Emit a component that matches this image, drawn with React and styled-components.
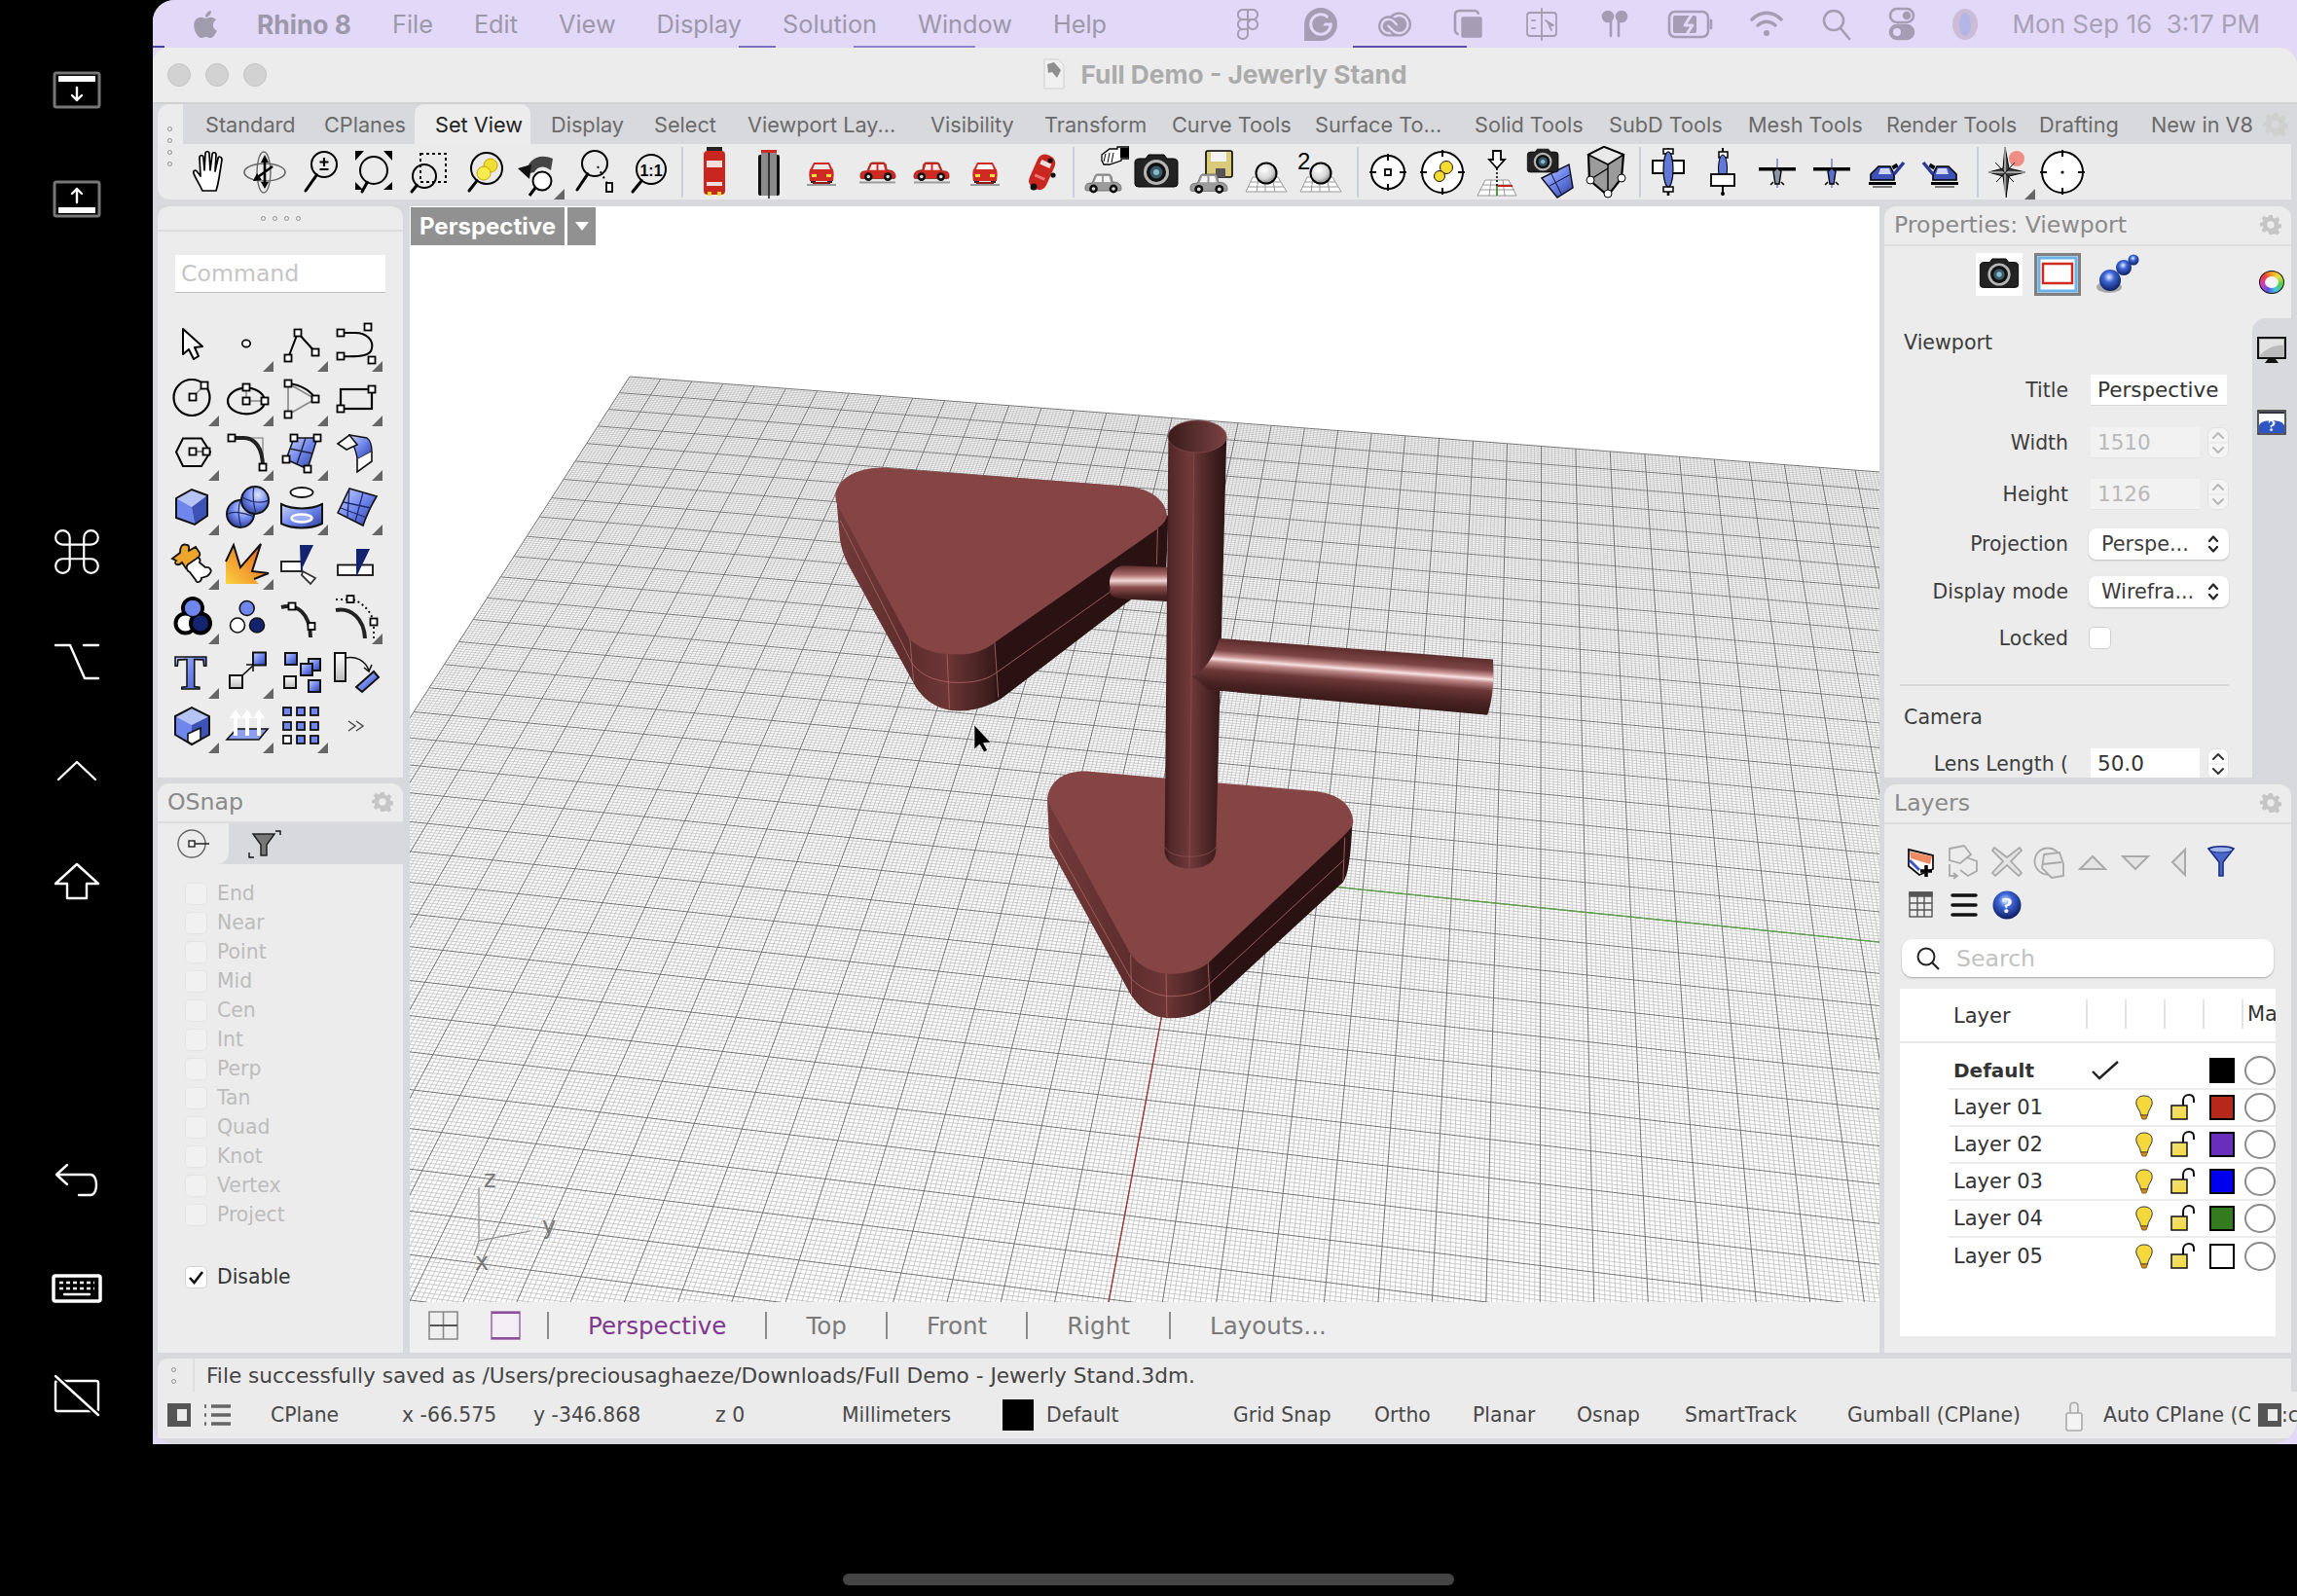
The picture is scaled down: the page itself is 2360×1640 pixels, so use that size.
import React from 'react';
import styled, { createGlobalStyle } from 'styled-components';
import { FaApple } from 'react-icons/fa';
import { SiFigma, SiGrammarly, SiAdobecreativecloud } from 'react-icons/si';

const GlobalStyle = createGlobalStyle`
  html, body { margin: 0; padding: 0; background: #000; width: 2360px; height: 1640px; overflow: hidden; }
  * { box-sizing: border-box; }
`;

const UI = `'DejaVu Sans', 'Liberation Sans', sans-serif`;
const SYS = `Inter, 'Liberation Sans', sans-serif`;

const Root = styled.div`
  width: 2360px; height: 1640px; background: #000; display: flex; flex-direction: column; overflow: hidden;
`;
const TopArea = styled.div`display: flex; height: 1484px;`;
const Sidebar = styled.aside`width: 157px; flex: none; display: flex; flex-direction: column; align-items: center;`;
const SideGroup = styled.div`display: flex; flex-direction: column; gap: ${p => p.$gap}px; margin-top: ${p => p.$mt}px;`;
const SideIcon = styled.svg`width: 56px; height: 56px; display: block; fill: none; stroke: #fff; stroke-width: ${p => p.$sw || 2.4}; stroke-linecap: round; stroke-linejoin: round;`;
const Main = styled.div`flex: 1; min-width: 0; display: flex; flex-direction: column; background: #e2d9f8; border-radius: 22px 0 0 0; overflow: hidden;`;
const MenuBar = styled.header`
  height: 49px; flex: none; display: flex; align-items: center; padding: 0 38px 0 40px; color: #9d97aa;
  font: 400 25.3px ${SYS};
  background: linear-gradient(to right, #4a3fa5 0 12px, #e2d9f8 12px 602px, #7a6fc0 602px 640px, #e2d9f8 640px 720px, #8d82d0 720px 845px, #e2d9f8 845px 1233px, #5a4fa8 1233px 1350px, #e2d9f8 1350px) bottom / 100% 2px no-repeat, #e2d9f8;
`;
const AppleMark = styled(FaApple)`width: 28px; height: 32px; color: #a19bae; margin-right: 39px; flex: none;`;
const MenuItem = styled.span`margin-right: 42px; white-space: nowrap; font-weight: ${p => (p.$bold ? 700 : 400)}; font-size: ${p => (p.$bold ? '26.4px' : 'inherit')};`;
const MenuRight = styled.div`margin-left: auto; display: flex; align-items: center;`;
const StatusCell = styled.div`width: ${p => p.$w}px; display: flex; justify-content: center; align-items: center; color: #a49db3; font-size: 0;`;
const StatusSvg = styled.svg`width: ${p => p.$s || 36}px; height: 36px; display: block; fill: none; stroke: ${p => p.$none ? 'none' : '#a49db3'}; stroke-width: ${p => p.$sw || 2.6}; stroke-linecap: round; stroke-linejoin: round;`;
const Clock = styled.time`width: 258px; margin-left: 13px; text-align: right; white-space: pre; font-size: 26px; color: #a8a1b6;`;
const Window = styled.div`
  flex: 1; min-height: 0; background: #d8d9dd; border-radius: 16px 18px 26px 22px; overflow: hidden; display: flex; flex-direction: column;
`;
const TitleBar = styled.div`height: 58px; flex: none; background: #ececec; border-bottom: 2px solid #d0d0d0; display: grid; grid-template-columns: 1fr auto 1fr; align-items: center;`;
const Lights = styled.div`display: flex; gap: 15px; padding-left: 15px;`;
const Light = styled.i`width: 24px; height: 24px; border-radius: 50%; background: #d2d2d2; border: 1px solid #c4c4c4; display: block;`;
const Title = styled.h1`margin: 0 0 2px; display: flex; align-items: center; gap: 15px; font: 700 26.3px ${SYS}; color: #ababab; white-space: nowrap;`;
const Toolbar = styled.div`margin: 0 6px 0 5px; height: 98px; flex: none; display: flex; flex-direction: column; border-radius: 12px 0 0 12px; overflow: hidden;`;
const TabRow = styled.nav`height: 41px; flex: none; display: flex; background: linear-gradient(to right, #ececec 0 26px, #d8d9dd 26px); padding-left: 35px; position: relative; align-items: stretch;`;
const Tab = styled.div`
  width: ${p => p.$w}px; flex: none; display: flex; align-items: center; white-space: nowrap;
  padding-left: ${p => (p.$active ? 21 : 14)}px; margin-right: ${p => (p.$active ? 7 : 0)}px;
  font: 400 21.7px ${SYS}; color: ${p => (p.$active ? '#222' : '#6a6a6a')};
  background: ${p => (p.$active ? '#ececec' : 'transparent')};
  border-radius: ${p => (p.$active ? '10px 10px 0 0' : '0')};
`;
const GearSlot = styled.div`position: absolute; right: 3px; top: 8px; width: 26px; height: 26px;`;
const ToolRow = styled.div`height: 57px; flex: none; display: flex; align-items: center; background: #ebebeb; padding-left: 26px; position: relative;`;
const Grip = styled.div`position: absolute; left: 10px; top: -18px; display: flex; flex-direction: column; gap: 7px; z-index: 2;`;
const GripDot = styled.i`display: block; width: 5px; height: 5px; border-radius: 50%; border: 1.2px solid #8f8f8f;`;
const ToolSep = styled.i`display: block; width: 2px; height: 52px; flex: none; background: #c9cfdc; margin: 0 ${p => p.$r}px 0 ${p => p.$l}px;`;
const IconSvg = styled.svg`width: ${p => p.$s || 56}px; height: ${p => p.$s || 56}px; display: block; flex: none;`;
const Workspace = styled.div`height: 1185px; flex: none; padding: 7px 6px 0 5px; display: flex;`;
const Col = styled.div`width: ${p => p.$w}px; flex: none; display: flex; flex-direction: column; margin-left: ${p => p.$ml || 0}px; min-width: 0;`;
const Panel = styled.section`height: ${p => p.$h}px; flex: none; background: #ececec; border-radius: 12px 12px 0 0; overflow: hidden; display: flex; flex-direction: column; margin-top: ${p => p.$mt || 0}px; position: relative;`;
const PanelHead = styled.div`height: 41px; flex: none; display: flex; align-items: center; justify-content: space-between; padding: 0 10px 2px; border-bottom: 2px solid #dedede; font: 400 23.6px ${UI}; color: #8a8a8a;`;
const DragHead = styled.div`height: 26px; flex: none; border-bottom: 2px solid #dedede; display: flex; justify-content: center; align-items: center; gap: 7px;`;
const DragDot = styled.i`display: block; width: 5px; height: 5px; border-radius: 50%; border: 1.2px solid #8f8f8f;`;
const CommandInput = styled.div`margin: 24px 18px 0; height: 39px; background: #fff; border-bottom: 1.5px solid #bdbdbd; font: 400 23.6px ${UI}; color: #c6c6c6; display: flex; align-items: center; padding-left: 6px;`;
const ToolGrid = styled.div`margin: 25px 0 0 7px; display: grid; grid-template-columns: repeat(4, 56px); grid-auto-rows: 56px;`;
const SnapTabs = styled.div`height: 42px; flex: none; display: flex; background: #d8d9dd;`;
const SnapTab = styled.div`width: 73px; background: #ececec; border-radius: 0 0 12px 0; display: flex; align-items: center; justify-content: center;`;
const SnapTabB = styled.div`width: 73px; display: flex; align-items: center; justify-content: center;`;
const SnapList = styled.div`padding: 15px 0 0 28px; display: flex; flex-direction: column;`;
const SnapRow = styled.label`height: 30px; flex: none; display: flex; align-items: center; gap: 10px; font: 400 20.4px ${UI}; color: ${p => (p.$on ? '#333' : '#bcbcbc')}; margin-top: ${p => p.$mt || 0}px;`;
const CheckBox = styled.i`width: 23px; height: 23px; border-radius: 5px; display: flex; align-items: center; justify-content: center; background: ${p => (p.$on ? '#fff' : '#f1f1f1')}; border: 1px solid ${p => (p.$on ? '#d4d4d4' : '#e4e4e4')}; flex: none;`;
const Viewport = styled.div`height: 1126px; flex: none; background: #fff; position: relative; overflow: hidden;`;
const SceneSvg = styled.svg`display: block; width: 1510px; height: 1126px;`;
const ViewLabel = styled.div`position: absolute; left: 1px; top: 1px; display: flex; gap: 3px; height: 39px;`;
const ViewName = styled.div`width: 158px; background: #919191; color: #fff; font: 700 24px ${SYS}; display: flex; align-items: center; justify-content: center;`;
const ViewArrow = styled.div`width: 29px; background: #919191; display: flex; align-items: center; justify-content: center;`;
const ViewTabs = styled.div`height: 52px; flex: none; background: #efefef; display: flex; align-items: center; padding-left: 19px; padding-bottom: 4px; font: 400 24.6px ${UI}; color: #7a7a7a;`;
const ViewIcon = styled.svg`width: 31px; height: 30px; display: block; margin-right: ${p => p.$mr}px; flex: none;`;
const ViewSep = styled.i`width: 2px; height: 28px; background: #8c8c8c; display: block; margin: 0 40px 0 ${p => (p.$first ? 0 : 40)}px; flex: none;`;
const ViewTab = styled.span`color: ${p => (p.$active ? '#80388f' : '#7a7a7a')}; white-space: nowrap;`;
const PropBody = styled.div`flex: 1; min-height: 0; display: flex;`;
const PropContent = styled.div`width: 378px; flex: none; padding-top: 5px;`;
const PropIcons = styled.div`display: flex; height: 48px; margin: 0 0 25px 94px; align-items: center;`;
const PropIconBox = styled.div`width: ${p => p.$w}px; height: ${p => p.$h}px; margin-right: ${p => p.$mr}px; background: ${p => p.$bg || 'transparent'}; flex: none; display: flex; align-items: center; justify-content: center;`;
const Heading = styled.div`height: ${p => p.$h}px; margin-top: ${p => p.$mt || 0}px; padding-left: 20px; display: flex; align-items: center; font: 400 20.6px ${UI}; color: #3c3c3c;`;
const PropRow = styled.div`height: ${p => p.$h}px; display: flex; align-items: center; font: 400 20.4px ${UI}; color: #3c3c3c;`;
const PropLabel = styled.span`width: 189px; flex: none; text-align: right; white-space: nowrap; margin-right: 23px;`;
const TextField = styled.div`
  width: ${p => p.$w}px; height: 32px; flex: none; background: ${p => (p.$off ? '#f2f2f2' : '#fff')}; color: ${p => (p.$off ? '#b9b9b9' : '#333')};
  display: flex; align-items: center; padding-left: 7px; font-size: 21.5px; border-bottom: 1px solid ${p => (p.$off ? '#e4e4e4' : '#d8d8d8')};
`;
const Stepper = styled.svg`width: 22px; height: 32px; margin-left: 8px; flex: none; display: block;`;
const SelectBox = styled.div`width: 144px; height: 32px; flex: none; margin-left: -2px; background: #fff; border-radius: 8px; box-shadow: 0 1px 2px #bdbdbd; display: flex; align-items: center; justify-content: space-between; padding: 0 10px 0 13px; font-size: 20.8px;`;
const PropCheck = styled.i`width: 23px; height: 23px; display: block; flex: none; background: #fff; border: 1px solid #d0d0d0; border-radius: 5px; margin-left: -2px;`;
const Divider = styled.hr`margin: 23px 0 0 16px; width: 338px; height: 2px; background: #d8d8d8; border: 0;`;
const SideTabs = styled.div`width: 40px; flex: none; display: flex; flex-direction: column; background: #ececec;`;
const SideTabOn = styled.div`height: 74px; flex: none; display: flex; align-items: center; justify-content: center; border-radius: 0 0 12px 0; background: #ececec;`;
const SideTabRest = styled.div`flex: 1; background: #d8d9dd; border-radius: 14px 0 0 0; display: flex; flex-direction: column; align-items: center; padding-top: 19px; gap: 47px;`;
const ColorWheel = styled.i`width: 26px; height: 24px; border-radius: 50%; border: 1.5px solid #111; display: flex; align-items: center; justify-content: center; background: conic-gradient(#f3a02c, #e9e23a, #55cf4c, #3fc7e0, #5a50e0, #d23cc0, #e83b3b, #f3a02c);`;
const WheelHole = styled.i`display: block; width: 14px; height: 12px; border-radius: 50%; background: #f5f5f5;`;
const LayerTools = styled.div`padding: 17px 0 0 16px; display: grid; grid-template-columns: repeat(8, 44px); grid-auto-rows: 44px;`;
const LayerTool = styled.svg`width: 44px; height: 44px; display: block;`;
const SearchBox = styled.div`margin: 13px 0 0 18px; width: 382px; height: 39px; flex: none; background: #fff; border-radius: 11px; box-shadow: 0 1px 2px #a9a9a9; display: flex; align-items: center; padding-left: 14px; gap: 16px; font: 400 23.6px ${UI}; color: #c2c2c2;`;
const LayerList = styled.div`margin: 12px 0 0 16px; width: 386px; height: 357px; flex: none; background: #fff; overflow: hidden; font: 400 21px ${UI}; color: #333;`;
const LayerHead = styled.div`height: 56px; padding-top: 1px; display: flex; align-items: center; border-bottom: 2px solid #e8e8e8;`;
const LayerHeadName = styled.div`width: 191px; padding-left: 55px; flex: none;`;
const HeadCol = styled.div`width: 40px; height: 30px; flex: none; border-left: 2px solid #e4e4e4; padding-left: 4px; white-space: nowrap; margin-top: -3px; line-height: 30px;`;
const LayerBody = styled.div`padding: 10px 0 0 50px;`;
const LayerRow = styled.div`height: 38px; display: grid; grid-template-columns: 141px 40px 40px 40px 40px 35px; align-items: center; border-bottom: ${p => (p.$last ? '0' : '2px solid #ececec')}; justify-items: center;`;
const LayerName = styled.span`justify-self: start; padding-left: 5px; font-weight: ${p => (p.$bold ? 700 : 400)}; font-size: ${p => (p.$bold ? '20px' : 'inherit')}; white-space: nowrap;`;
const CellSvg = styled.svg`width: 26px; height: 28px; display: block;`;
const Swatch = styled.i`display: block; width: 26px; height: 26px; background: ${p => p.$c}; border: 2px solid #000;`;
const MatCircle = styled.i`display: block; width: 32px; height: 30px; border-radius: 50%; border: 2px solid #8b8b8b; justify-self: end; background: #fff;`;
const StatusMsg = styled.div`margin: 6px 6px 0 5px; height: 34px; flex: none; background: #ebebeb; display: flex; align-items: center; border-radius: 10px 0 0 0; font: 400 21.65px ${UI}; color: #444; padding-left: 14px; white-space: nowrap;`;
const MsgGrip = styled.div`display: flex; flex-direction: column; gap: 7px; flex: none; margin-right: 17px;`;
const MsgLine = styled.i`display: block; width: 2px; height: 34px; background: #dedede; margin-right: 12px; flex: none;`;
const StatusBar = styled.footer`margin: 0 0 0 5px; height: 48px; flex: none; background: #ebebeb; display: flex; align-items: center; padding-left: 10px; font: 400 20.4px ${UI}; color: #484848; overflow: hidden;`;
const PaneIcon = styled.i`display: block; width: 24px; height: 24px; flex: none; margin-left: ${p => p.$ml || 0}px; border: 6px solid #555; border-left-width: 10px; border-right-width: 4px; background: #ececec;`;
const ListIcon = styled.svg`width: 30px; height: 30px; margin: 0 39px 0 13px; display: block; flex: none;`;
const StatusItem = styled.span`width: ${p => p.$w}px; flex: none; white-space: nowrap; overflow: hidden;`;
const BlackBox = styled.i`display: block; width: 32px; height: 32px; background: #000; margin-right: 13px; flex: none;`;
const LockSvg = styled.svg`width: 39px; height: 34px; flex: none; display: block;`;
const Bottom = styled.div`flex: 1; display: flex; justify-content: center; align-items: flex-end; padding-bottom: 11px;`;
const HomeBar = styled.i`display: block; width: 628px; height: 12px; border-radius: 6px; background: #444;`;
const Defs = styled.svg`position: absolute; width: 0; height: 0;`;

/* ---------- helpers ---------- */
const H = ({ x, y, s = 7 }) => <rect x={x - s / 2} y={y - s / 2} width={s} height={s} fill="#fff" stroke="#000" strokeWidth="1.8" />;
const I = ({ fly, children }) => (
  <IconSvg viewBox="0 0 56 56">
    {children}
    {fly && <path d="M45 56H56V45Z" fill="#666" />}
  </IconSvg>
);
const Gear = ({ s = 22, c = '#c6c6c6' }) => (
  <svg width={s} height={s} viewBox="0 0 24 24"><path fill={c} fillRule="evenodd" d="M10 1h4l.6 3.2 2.1.9 2.7-1.9 2.8 2.8-1.9 2.7.9 2.1 3.2.6v4l-3.2.6-.9 2.1 1.9 2.7-2.8 2.8-2.7-1.9-2.1.9L14 23h-4l-.6-3.2-2.1-.9-2.7 1.9-2.8-2.8 1.9-2.7-.9-2.1L-.4 14v-4l3.2-.6.9-2.1L1.8 4.6 4.6 1.8l2.7 1.9 2.1-.9zM12 8a4 4 0 100 8 4 4 0 000-8z" /></svg>
);

/* ---------- cars ---------- */
const CarSide = ({ c = '#cf2a22', dark = '#8f1411', x = 10, y = 20, w = 38, flip, ground = '#9a9a9a' }) => (
  <g transform={`translate(${x} ${y}) scale(${(flip ? -1 : 1) * w / 38} ${w / 38}) translate(${flip ? -38 : 0} 0)`}>
    <path d="M1 14C1 10 3 9 8 9L11 2C11 1 12 0 14 0H25C27 0 27 1 28 2L29 8C35 8 38 10 38 15C38 17 37 17 36 17H3C1 17 1 16 1 14Z" fill={c} stroke={dark} strokeWidth=".8" />
    <path d="M13 2H18V8H10.5ZM20 2H25.5L27 8H20Z" fill="#fff" opacity=".9" />
    <circle cx="9.5" cy="15" r="4.4" fill="#111" /><circle cx="9.5" cy="15" r="1.8" fill="#ddd" />
    <circle cx="30" cy="15" r="4.4" fill="#111" /><circle cx="30" cy="15" r="1.8" fill="#ddd" />
    {ground && <rect x="0" y="20" width="38" height="2" fill={ground} />}
  </g>
);
const CarFront = ({ rear }) => (
  <I>
    <rect x="15" y="36" width="5" height="3" fill="#222" /><rect x="32" y="36" width="5" height="3" fill="#222" />
    <path d="M15 24L18 18H34L37 24C39 26 39 30 38 37H14C13 30 13 26 15 24Z" fill="#d02a24" />
    <path d="M19 20H33L35 25H17Z" fill={rear ? '#fff' : '#e9e9e9'} />
    <rect x="16" y="30" width="5" height="3" fill="#f2e23b" /><rect x="31" y="30" width="5" height="3" fill="#f2e23b" />
    <rect x="17" y="38" width="18" height="2" fill="#8d1612" />
    <rect x="11" y="40" width="30" height="2" fill="#9a9a9a" />
  </I>
);
const Magnifier = ({ cx, cy, r, x2, y2, children, fly }) => {
  const a = Math.atan2(y2 - cy, x2 - cx);
  return (
    <I fly={fly}>
      {children && children[0]}
      <circle cx={cx} cy={cy} r={r} fill="none" stroke="#000" strokeWidth="2" />
      <line x1={cx + Math.cos(a) * r} y1={cy + Math.sin(a) * r} x2={x2} y2={y2} stroke="#000" strokeWidth="3" strokeLinecap="round" />
      {children && children[1]}
    </I>
  );
};
const Sphere = ({ two }) => (
  <I>
    <path d="M8 48L15 33H41L50 48ZM13 38H44M10 43H47M21 33L19 48M28 33V48M35 33L38 48" fill="#fff" stroke="#999" strokeWidth="1" />
    <circle cx="29" cy="29" r="10.5" fill="url(#ball)" stroke="#000" strokeWidth="2" />
    {two && <text x="5" y="25" fontFamily="Liberation Sans, sans-serif" fontSize="24" fill="#000">2</text>}
  </I>
);
const Plane = ({ side, flip, c = '#8c95a8' }) =>
  side ? (
    <I>
      <g transform={flip ? 'translate(56 0) scale(-1 1)' : undefined}>
        <path d="M12 30L20 22H32L36 30V36H12Z" fill="#3e51b8" stroke="#000" strokeWidth="1.6" />
        <path d="M22 24H31L33 30H20Z" fill="#cfd6f5" />
        <rect x="34" y="20" width="6" height="4" transform="rotate(-30 37 22)" fill="#000" />
        <path d="M36 30L46 18" stroke="#2a3a9a" strokeWidth="3.5" />
        <rect x="10" y="38" width="28" height="3" fill="#000" /><rect x="14" y="42" width="20" height="2" fill="#777" />
      </g>
    </I>
  ) : (
    <I>
      <rect x="9" y="23" width="38" height="3.5" fill="#000" />
      <path d="M28 14V44" stroke="#3a4bb0" strokeWidth="1" />
      <path d="M24 27L28 24L32 27L30 40H26Z" fill={c} stroke="#000" strokeWidth="1.4" />
      <path d="M21 41L24 38M35 41L32 38" stroke="#000" strokeWidth="1.6" />
    </I>
  );

/* ---------- toolbar ---------- */
const toolbarA = [
  <I key="hand"><path d="M20 47C17 40 12 33 11 29C10 26 13 25 15 28L18 32L17 13C17 10 21 10 21 13L22 26L23 9C23 6 27 6 27 9L28 26L30 10C30 7 34 7 34 10L33 27L36 14C36 11 40 12 40 15L37 34C36 40 35 44 34 47Z" fill="#fff" stroke="#000" strokeWidth="1.7" strokeLinejoin="round" /></I>,
  <I key="orbit"><ellipse cx="27" cy="28" rx="7" ry="21" fill="none" stroke="#666" strokeWidth="1.4" /><ellipse cx="28" cy="28" rx="21" ry="9" fill="none" stroke="#666" strokeWidth="1.6" /><path d="M28 15V41M18 35L36 22" stroke="#000" strokeWidth="2.6" /><path d="M28 10L32 18H24ZM16 37L20 29L25 36ZM28 45L24 38H32Z" fill="#000" /></I>,
  <Magnifier key="zp" cx={33} cy={20} r={13} x2={14} y2={47}>{[null, <path key="p" d="M33 13V22M28.5 17.5H37.5M28.5 25H37.5" stroke="#000" strokeWidth="2.2" />]}</Magnifier>,
  <Magnifier key="ze" cx={28} cy={26} r={14} x2={16} y2={48}>{[null, <path key="c" d="M9 6H18L9 16ZM47 6H38L47 16ZM9 46V38L17 46ZM47 46V38L38 46Z" fill="#000" />]}</Magnifier>,
  <Magnifier key="zw" cx={24} cy={32} r={12} x2={11} y2={48}>{[null, <rect key="r" x="20" y="9" width="26" height="29" fill="none" stroke="#000" strokeWidth="2" strokeDasharray="3 3" />]}</Magnifier>,
  <Magnifier key="zs" cx={32} cy={24} r={16} x2={14} y2={47}>{[null, <g key="d"><circle cx="36" cy="21" r="7" fill="#f1de33" stroke="#c9a400" /><circle cx="29" cy="29" r="7" fill="#f7ec4f" stroke="#c9a400" /></g>]}</Magnifier>,
  <I key="rot" fly><path d="M16 30C18 14 30 8 44 14L42 26C34 20 28 22 25 28Z" fill="#444" /><path d="M8 24L22 20L20 35Z" fill="#111" /><circle cx="33" cy="37" r="9.5" fill="#fff" stroke="#000" strokeWidth="2" /><line x1="26" y1="44" x2="20" y2="52" stroke="#000" strokeWidth="3" /></I>,
  <Magnifier key="zt" cx={31} cy={19} r={13} x2={13} y2={46}>{[null, <g key="t"><path d="M34 22L44 40" stroke="#000" strokeWidth="2" strokeDasharray="2 4" /><rect x="43" y="39" width="6" height="9" fill="#fff" stroke="#000" strokeWidth="1.8" /></g>]}</Magnifier>,
  <Magnifier key="z1" cx={33} cy={25} r={15} x2={14} y2={48}>{[null, <text key="x" x="33" y="32" textAnchor="middle" fontSize="16" fontWeight="700" fontFamily="Liberation Sans, sans-serif">1:1</text>]}</Magnifier>,
];
const toolbarB = [
  <I key="t1"><rect x="17" y="6" width="22" height="45" rx="4" fill="#c9261f" /><rect x="20" y="2" width="16" height="4" fill="#222" /><rect x="20" y="16" width="16" height="7" fill="#f3dede" /><rect x="20" y="38" width="16" height="4" fill="#f3dede" /><rect x="21" y="48" width="4" height="4" fill="#f0d920" /><rect x="31" y="48" width="4" height="4" fill="#f0d920" /></I>,
  <I key="t2"><rect x="17" y="10" width="22" height="42" rx="2" fill="#111" /><rect x="20" y="5" width="16" height="4" fill="#d02a24" /><rect x="20" y="8" width="16" height="44" fill="#8a8a8a" /><rect x="27.3" y="8" width="1.4" height="47" fill="#111" /></I>,
  <CarFront key="t3" />,
  <I key="t4"><CarSide x={9} y={18} w={37} /></I>,
  <I key="t5"><CarSide x={9} y={18} w={37} flip /></I>,
  <CarFront key="t6" rear />,
  <I key="t7"><g transform="rotate(24 28 28)"><rect x="19" y="9" width="19" height="37" rx="8" fill="#c9261f" /><rect x="23" y="16" width="11" height="5" fill="#f3dede" /><rect x="23" y="32" width="11" height="3" fill="#e77" /></g><circle cx="20" cy="43" r="3.5" fill="#111" /><circle cx="37" cy="16" r="2.6" fill="#111" /><circle cx="40" cy="31" r="2.6" fill="#111" /></I>,
];
const Camera = () => (
  <g>
    <path d="M6 18Q6 14 11 14H17L20 10H36L39 14H45Q50 14 50 18V40Q50 43 46 43H10Q6 43 6 40Z" fill="#222" stroke="#000" />
    <circle cx="28" cy="28" r="13" fill="#b5b5b5" /><circle cx="28" cy="28" r="10" fill="#111" /><circle cx="28" cy="28" r="6.5" fill="#3a5866" /><circle cx="28" cy="28" r="3" fill="#8bc" />
  </g>
);
const toolbarC = [
  <I key="c1"><path d="M28 10L36 4H44V2H56V14H48V16L36 20H30L28 16Z" fill="#fff" stroke="#000" strokeWidth="1.3" /><rect x="47" y="3" width="9" height="10" fill="#000" /><path d="M32 9L30 17M36 8L34 18M40 8L38 18" stroke="#000" strokeWidth="1" /><CarSide x={10} y={30} w={38} c="#9c9c9c" dark="#666" ground={null} /></I>,
  <I key="c2"><Camera /></I>,
  <I key="c3"><rect x="23" y="6" width="27" height="27" rx="2" fill="#d9cb7a" stroke="#000" strokeWidth="1.6" /><rect x="28" y="7" width="16" height="10" fill="#f2f2f2" /><rect x="33" y="24" width="10" height="9" fill="#555" /><CarSide x={6} y={30} w={39} c="#9c9c9c" dark="#666" ground={null} /></I>,
  <Sphere key="c4" />,
  <Sphere key="c5" two />,
];
const Target = ({ r = 17, children }) => (
  <I>
    <circle cx="28" cy="28" r={r} fill="#fff" stroke="#000" strokeWidth="2" />
    <path d={`M28 ${28 - r - 2}V${28 - r + 5}M28 ${28 + r + 2}V${28 + r - 5}M${28 - r - 2} 28H${28 - r + 5}M${28 + r + 2} 28H${28 + r - 5}`} stroke="#000" strokeWidth="2" />
    {children}
  </I>
);
const toolbarD = [
  <Target key="d1"><rect x="25" y="25" width="6" height="6" fill="#fff" stroke="#000" strokeWidth="1.8" /></Target>,
  <Target key="d2" r={21}><circle cx="32" cy="23" r="6.5" fill="#f6dc2f" stroke="#111" /><circle cx="25" cy="32" r="5.5" fill="#f6dc2f" stroke="#111" /></Target>,
  <I key="d3"><path d="M8 52L16 36H40L48 52ZM13 41H43M10 46H46M22 36L20 52M34 36L36 52" fill="#fff" stroke="#999" /><path d="M28 42H44" stroke="#c8201a" strokeWidth="2" /><path d="M28 42V52" stroke="#4a9e3a" strokeWidth="2" /><path d="M28 24V42" stroke="#000" strokeWidth="1.6" strokeDasharray="2 2" /><path d="M24 6H32V15H36L28 24L20 15H24Z" fill="#fff" stroke="#000" strokeWidth="1.8" /></I>,
  <I key="d4"><path d="M18 34L46 20L50 44L34 54Z" fill="url(#blue)" stroke="#112" strokeWidth="1.5" /><path d="M28 30L38 50M26 42L48 30" stroke="#112" strokeWidth="1" /><g transform="translate(-1 -3) scale(.72)"><Camera /></g></I>,
  <I key="d5"><path d="M10 10L26 2L46 10L44 34L30 52L11 36Z" fill="#9b9b9b" stroke="#000" strokeWidth="2.2" /><path d="M30 20V52M11 36L30 24" stroke="#000" strokeWidth="1.4" fill="none" /><path d="M10 10L26 2L46 10L30 20Z" fill="#e9e9e9" stroke="#000" strokeWidth="1.6" /><circle cx="12" cy="36" r="4" fill="#fff" stroke="#000" /><circle cx="44" cy="34" r="4" fill="#fff" stroke="#000" /><circle cx="30" cy="50" r="4" fill="#fff" stroke="#000" /></I>,
];
const toolbarE = [
  <I key="e1"><path d="M28 3V52" stroke="#000" strokeWidth="2.6" /><rect x="23" y="4" width="10" height="5" fill="#fff" stroke="#000" strokeWidth="1.5" /><rect x="23" y="43" width="10" height="5" fill="#fff" stroke="#000" strokeWidth="1.5" /><rect x="12" y="16" width="32" height="13" fill="#fff" stroke="#000" strokeWidth="2" /><ellipse cx="28" cy="25" rx="5" ry="18" fill="#6078d8" stroke="#000" strokeWidth="1.2" /></I>,
  <I key="e2"><path d="M28 3V52" stroke="#000" strokeWidth="2" /><rect x="24" y="7" width="9" height="6" fill="#fff" stroke="#000" strokeWidth="1.5" /><ellipse cx="28" cy="24" rx="4.5" ry="14" fill="#6078d8" stroke="#000" /><rect x="16" y="30" width="24" height="12" fill="#fff" stroke="#000" strokeWidth="1.8" /><circle cx="28" cy="50" r="2" fill="#000" /></I>,
  <Plane key="e3" />,
  <Plane key="e4" c="#5a6ed0" />,
  <Plane key="e5" side />,
  <Plane key="e6" side flip />,
];
const toolbarF = [
  <I key="f1" fly><circle cx="37" cy="14" r="8" fill="#ef8d84" /><path d="M25 2L29 24L46 28L29 32L26 54L23 32L8 28L23 24Z" fill="#444" stroke="#000" /><path d="M25 2V54M8 28H46" stroke="#fff" strokeWidth="1" /><path d="M15 18L34 38M35 18L16 38" stroke="#000" /></I>,
  <Target key="f2" r={21}><circle cx="28" cy="28" r="1.6" fill="#000" /></Target>,
];

/* ---------- side tools ---------- */
const sideTools = [
  <I key="1"><path d="M19 12V38L25 33L30 43L35 40L31 31L39 30Z" fill="#fff" stroke="#000" strokeWidth="2" strokeLinejoin="round" /></I>,
  <I key="2" fly><ellipse cx="28" cy="27" rx="4.2" ry="3.6" fill="#fff" stroke="#000" strokeWidth="1.6" /></I>,
  <I key="3" fly><path d="M15 42L25 16L43 36" fill="none" stroke="#000" strokeWidth="2" /><H x={25} y={16} /><H x={15} y={42} /><H x={43} y={36} /></I>,
  <I key="4" fly><path d="M13 16H28C40 16 47 24 45 32C44 39 36 41 13 40" fill="none" stroke="#000" strokeWidth="2" /><H x={13} y={16} /><H x={41} y={10} /><H x={13} y={40} /><H x={45} y={44} /></I>,

  <I key="5" fly><circle cx="28" cy="26.5" r="18.5" fill="none" stroke="#000" strokeWidth="2.2" /><path d="M29 26L41 14" stroke="#888" strokeWidth="1.5" /><H x={29} y={26} /><H x={41} y={14} /></I>,
  <I key="6" fly><ellipse cx="28" cy="30" rx="19" ry="13.4" fill="none" stroke="#000" strokeWidth="2.2" /><path d="M28 16V30H47" stroke="#888" strokeWidth="1.5" fill="none" /><H x={28} y={16} /><H x={28} y={30} /><H x={47} y={30} /></I>,
  <I key="7" fly><path d="M15 44V12L43 28Z" fill="none" stroke="#888" strokeWidth="1.6" /><path d="M15 12C28 13 39 20 43 28" fill="none" stroke="#000" strokeWidth="2" /><H x={15} y={12} /><H x={43} y={28} /><H x={15} y={44} /></I>,
  <I key="8" fly><rect x="13" y="18" width="32" height="20" fill="none" stroke="#000" strokeWidth="2.2" /><H x={13} y={38} /><H x={45} y={18} /></I>,

  <I key="9" fly><path d="M12 26.5L19 12.5H38L47 26.5L38 41H19Z" fill="none" stroke="#000" strokeWidth="2" /><path d="M29 26H43" stroke="#555" strokeWidth="1.4" /><H x={29} y={26} /><H x={43} y={26} /></I>,
  <I key="10" fly><path d="M33 12H45V42" fill="none" stroke="#999" strokeWidth="1.6" /><path d="M13 12H25C37 12 45 22 45 42" fill="none" stroke="#222" strokeWidth="4" /><H x={13} y={12} /><H x={45} y={42} /></I>,
  <I key="11" fly><path d="M21 12H45L35 44L13 34Z" fill="url(#blue)" stroke="#111" strokeWidth="1.5" /><path d="M33 12L24 39M17 23L40 28" stroke="#223" strokeWidth="1.4" /><H x={21} y={12} /><H x={45} y={12} /><H x={35} y={44} /><H x={13} y={34} /></I>,
  <I key="12" fly><path d="M22 9L40 12C44 15 45 20 45 26L30 34C30 27 27 22 22 9Z" fill="url(#blue)" stroke="#111" strokeWidth="1.4" /><path d="M10 18L22 9L30 19L19 24Z" fill="#fff" stroke="#111" strokeWidth="1.6" /><path d="M30 34V47L45 36V26" fill="#fff" stroke="#111" strokeWidth="1.6" /></I>,

  <I key="13" fly><path d="M12 18L28 9L44 15L28 27Z" fill="#b6c3f5" /><path d="M12 18L28 27L31 45L12 38Z" fill="#6f86ee" /><path d="M28 27L44 15V36L31 45Z" fill="#3c52b4" /><path d="M12 18L28 9L44 15V36L31 45L12 38Z" fill="none" stroke="#111" strokeWidth="2" /></I>,
  <I key="14" fly><circle cx="22" cy="34" r="14" fill="url(#sph)" stroke="#111" strokeWidth="2" /><circle cx="37" cy="20" r="14" fill="url(#sph)" stroke="#111" strokeWidth="2" /><path d="M23 16C30 22 44 24 51 20M36 6C34 14 36 26 38 34M9 34C16 30 28 34 36 37M22 20C19 28 20 40 23 48" fill="none" stroke="#1c2a6a" strokeWidth="1.2" /></I>,
  <I key="15" fly><ellipse cx="29" cy="12" rx="11.6" ry="5" fill="#fff" stroke="#111" strokeWidth="1.8" /><path d="M8 24C20 30 38 30 50 24V44C38 50 20 50 8 44Z" fill="url(#blue)" stroke="#111" strokeWidth="2" /><ellipse cx="29" cy="38.5" rx="10.5" ry="4" fill="#9fb0f6" stroke="#fff" strokeWidth="2.4" /></I>,
  <I key="16" fly><path d="M10 33L22 8L50 16C44 26 40 34 36 46C28 42 18 37 10 33Z" fill="url(#blue)" stroke="#111" strokeWidth="1.6" /><path d="M16 22L44 28M22 8L20 37M36 12L28 42M13 28L40 38" stroke="#1c2a6a" strokeWidth="1.3" fill="none" /></I>,

  <I key="17" fly><path d="M8 24L16 18C16 12 18 8 23 10C26 10 25 14 25 16L32 12L36 18C38 22 33 24 31 26L22 34L18 28C14 32 9 30 12 26Z" fill="#eda62c" stroke="#111" strokeWidth="1.8" /><path d="M24 30L33 24C34 22 38 24 36 28L42 33C46 32 50 36 46 40L44 42L38 44C38 48 33 50 32 46L26 38C22 36 22 32 24 30Z" fill="#fff" stroke="#111" strokeWidth="1.8" /></I>,
  <I key="18" fly><path d="M7 50L7 27L15 10L22 33L43 9L34 37L51 39L36 45L41 50Z" fill="url(#fire)" /><path d="M7 27L15 10L22 33L43 9L34 37L51 39L36 45" fill="none" stroke="#111" strokeWidth="2" /></I>,
  <I key="19"><rect x="8" y="27" width="21" height="10" fill="#fff" stroke="#111" strokeWidth="1.8" /><path d="M28 38L41 45L36 51L27 42Z" transform="translate(2 -1)" fill="#fff" stroke="#333" strokeWidth="1.8" /><path d="M27 10H41L28 37Z" fill="#14236f" /></I>,
  <I key="20"><rect x="10" y="30.5" width="36" height="10.5" fill="#fff" stroke="#111" strokeWidth="1.8" /><path d="M29 14H43L30 41H29Z" fill="#14236f" /></I>,

  <I key="21" fly><circle cx="29" cy="19" r="10" fill="#6f86ee" stroke="#000" strokeWidth="4" /><circle cx="21.5" cy="34.5" r="10" fill="#fff" stroke="#000" strokeWidth="4" /><circle cx="37" cy="34.5" r="10" fill="#14236f" stroke="#000" strokeWidth="4" /><circle cx="29" cy="19" r="8" fill="#6f86ee" /></I>,
  <I key="22"><circle cx="28.7" cy="19" r="7.5" fill="#6f86ee" stroke="#111" strokeWidth="1.6" /><circle cx="19" cy="36.5" r="7.5" fill="#fff" stroke="#111" strokeWidth="1.6" /><circle cx="39" cy="36.5" r="7.5" fill="#14236f" stroke="#111" strokeWidth="1.6" /></I>,
  <I key="23"><path d="M8 18C24 14 38 24 38 49" fill="none" stroke="#222" strokeWidth="4" /><H x={19} y={17} /><H x={39} y={37.5} /></I>,
  <I key="24" fly><path d="M8 21C24 18 37 30 38 50" fill="none" stroke="#222" strokeWidth="4" /><path d="M8 10H22M26 10C36 14 44 22 47 33M47 38V50" fill="none" stroke="#111" strokeWidth="2" strokeDasharray="2 3" /><H x={23} y={9.6} /><H x={47} y={33} /></I>,

  <I key="25" fly><text x="27" y="46" textAnchor="middle" fontFamily="Liberation Serif, serif" fontWeight="700" fontSize="50" fill="url(#blue)" stroke="#111" strokeWidth="1.6">T</text></I>,
  <I key="26" fly><rect x="11" y="32" width="13" height="13" fill="url(#gray)" stroke="#111" strokeWidth="2" /><rect x="35" y="8.5" width="13" height="13" fill="url(#blue)" stroke="#111" strokeWidth="2" /><path d="M24 32L35 22M28 21H35V28" fill="none" stroke="#111" strokeWidth="1.6" /></I>,
  <I key="27"><rect x="12" y="9" width="12" height="12" fill="url(#blue)" stroke="#111" strokeWidth="2" /><rect x="36" y="15" width="12" height="12" fill="url(#blue)" stroke="#111" strokeWidth="2" /><rect x="28" y="20" width="12" height="12" fill="url(#blue)" stroke="#111" strokeWidth="2" /><rect x="11" y="33" width="12" height="12" fill="url(#gray)" stroke="#111" strokeWidth="2" /><rect x="36" y="37" width="12" height="12" fill="url(#blue)" stroke="#111" strokeWidth="2" /></I>,
  <I key="28"><rect x="7" y="9" width="11" height="29" fill="url(#gray)" stroke="#111" strokeWidth="2" /><path d="M32 50L50 34L55 40L38 55Z" transform="translate(-3 -6)" fill="url(#blue)" stroke="#111" strokeWidth="2" /><path d="M18 14C28 12 38 16 42 27M37 24L42 28L45 21" fill="none" stroke="#111" strokeWidth="1.6" /></I>,

  <I key="29" fly><path d="M11 18L28 9L46 18L28 27Z" fill="#b6c3f5" /><path d="M11 18L28 27V47L11 37Z" fill="#6f86ee" /><path d="M28 27L46 18V37L28 47Z" fill="#3c52b4" /><path d="M24 36L37 30V42L28 47L24 44Z" fill="#fff" stroke="#111" strokeWidth="1.6" /><path d="M11 18L28 9L46 18V37L28 47L11 37Z" fill="none" stroke="#111" strokeWidth="2" /></I>,
  <I key="30" fly><path d="M8 42L18 31H50L41 42Z" fill="#8d9ff0" stroke="#111" strokeWidth="1.6" /><path d="M17 38V18M29 38V18M41 38V18" stroke="#fff" strokeWidth="4" /><path d="M11 20L17 11L23 20ZM23 20L29 11L35 20ZM35 20L41 11L47 20Z" fill="#fff" /></I>,
  <I key="31" fly>{[13, 28, 42].flatMap(y => [14, 28, 42].map(x => <rect key={`${x}-${y}`} x={x - 4} y={y - 4} width="8" height="8" fill={x === 14 && y === 42 ? '#fff' : '#6f86ee'} stroke="#111" strokeWidth="1.8" />))}</I>,
  <I key="32"><path d="M21 23L28 28L21 33M29 23L36 28L29 33" fill="none" stroke="#444" strokeWidth="1.4" /></I>,
];

/* ---------- viewport ---------- */
const VA = [-17160, -972], VB = [1586, -1071], O = [1221, 896];
const g = -0.0024135, h = 0.015205;
const pt = (X, Y) => {
  const p = g * X, q = h * Y, d = p + q + 1;
  return [(p * VA[0] + q * VB[0] + O[0]) / d, (p * VA[1] + q * VB[1] + O[1]) / d];
};
const seg = (a, b) => `M${a[0].toFixed(1)} ${a[1].toFixed(1)}L${b[0].toFixed(1)} ${b[1].toFixed(1)}`;
let minor = '', major = '';
for (let i = -200; i <= 200; i++) {
  const v = i / 10;
  const s = seg(pt(v, -20), pt(v, 20)) + seg(pt(-20, v), pt(20, v));
  if (i % 10 === 0) major += s; else minor += s;
}

const Scene = () => (
  <SceneSvg viewBox="421 212 1510 1126">
    <defs>
      <linearGradient id="wallU" gradientUnits="userSpaceOnUse" x1="82" y1="0" x2="800" y2="0">
        <stop offset="0" stopColor="#733a3a" /><stop offset=".22" stopColor="#5e2d2d" /><stop offset=".33" stopColor="#6d3636" /><stop offset=".47" stopColor="#3a1b1b" /><stop offset=".48" stopColor="#2b1212" /><stop offset="1" stopColor="#2a1212" />
      </linearGradient>
      <linearGradient id="wallL" gradientUnits="userSpaceOnUse" x1="535" y1="0" x2="1190" y2="0">
        <stop offset="0" stopColor="#733a3a" /><stop offset=".27" stopColor="#5e2d2d" /><stop offset=".39" stopColor="#6d3636" /><stop offset=".53" stopColor="#3a1b1b" /><stop offset=".54" stopColor="#2b1212" /><stop offset="1" stopColor="#2a1212" />
      </linearGradient>
      <linearGradient id="pole" gradientUnits="userSpaceOnUse" x1="787" y1="0" x2="920" y2="0">
        <stop offset="0" stopColor="#3a1a1a" /><stop offset=".1" stopColor="#542929" /><stop offset=".42" stopColor="#703a3a" /><stop offset=".72" stopColor="#4a2424" /><stop offset="1" stopColor="#2b1313" />
      </linearGradient>
      <linearGradient id="bore" gradientUnits="userSpaceOnUse" x1="795" y1="0" x2="920" y2="0">
        <stop offset="0" stopColor="#3a1b1b" /><stop offset="1" stopColor="#7a4242" />
      </linearGradient>
      <linearGradient id="arm" gradientUnits="userSpaceOnUse" x1="1200" y1="613" x2="1189" y2="746">
        <stop offset="0" stopColor="#5a2a2a" /><stop offset=".22" stopColor="#7c4545" /><stop offset=".32" stopColor="#c99494" /><stop offset=".38" stopColor="#f8e2e2" /><stop offset=".44" stopColor="#c08a8a" /><stop offset=".58" stopColor="#6d3838" /><stop offset=".8" stopColor="#4a2323" /><stop offset="1" stopColor="#381919" />
      </linearGradient>
      <linearGradient id="stub" gradientUnits="userSpaceOnUse" x1="0" y1="418" x2="0" y2="503">
        <stop offset="0" stopColor="#5d2d2d" /><stop offset=".25" stopColor="#a86a6a" /><stop offset=".42" stopColor="#f3d8d8" /><stop offset=".6" stopColor="#8d5050" /><stop offset=".85" stopColor="#4a2323" /><stop offset="1" stopColor="#3d1c1c" />
      </linearGradient>
    </defs>
    <path d={minor} stroke="#c2c2c2" strokeWidth=".85" fill="none" />
    <path d={major} stroke="#6a6a6a" strokeWidth=".95" fill="none" />
    <path d={seg(pt(0, 0), pt(20, 0))} stroke="#5f9c4f" strokeWidth="1.4" fill="none" />
    <path d={seg(pt(0, 0), pt(0, -20))} stroke="#a23a3a" strokeWidth="1.4" fill="none" />
    <g transform="translate(820 400) scale(.4785 .4337)">
      <path d="M82 255L88 335C90 375 100 400 112 425L245 690C265 735 300 762 345 762C385 762 415 748 440 730L700 510L790 440L795 300Z" fill="url(#wallU)" />
      <path d="M90 310L245 650C265 680 300 695 345 695C385 695 410 685 425 672L670 480M240 590L248 692M320 628L325 757M422 600L430 730M772 330L770 415" stroke="#a56161" strokeWidth="2" fill="none" />
      <path d="M80 250C85 210 130 183 190 186L710 230C755 236 790 262 792 300C790 315 780 322 770 332L425 598C400 620 370 630 340 628C290 628 252 612 235 585L85 275C82 268 80 260 80 250Z" fill="#854545" />
      <path d="M670 470C665 440 680 418 700 418L800 422V503L700 497C680 495 665 490 670 470Z" fill="url(#stub)" />

      <path d="M535 975L540 1085L712 1430C735 1470 760 1490 800 1490C840 1490 865 1478 885 1458L1170 1168C1180 1150 1186 1120 1190 1030Z" fill="url(#wallL)" />
      <path d="M538 1050L714 1395C740 1425 775 1438 800 1438C835 1438 862 1430 880 1412L1172 1115M714 1340L716 1435M790 1385L792 1488M880 1358L885 1458M1174 1062L1170 1165" stroke="#a56161" strokeWidth="2" fill="none" />
      <path d="M535 970C540 925 575 903 620 905L1115 953C1160 960 1190 985 1192 1025C1190 1040 1180 1048 1170 1060L882 1358C860 1378 830 1385 800 1385C760 1385 730 1365 712 1335L542 990C538 985 535 978 535 970Z" fill="#854545" />

      <path d="M795 112L787 1095C790 1125 815 1135 842 1135C872 1135 895 1122 897 1095L920 112Z" fill="url(#pole)" />
      <path d="M850 150L840 1132M788 1085C800 1115 880 1115 897 1085" stroke="#8d5252" strokeWidth="1.6" fill="none" />
      <ellipse cx="857" cy="112" rx="63" ry="38" fill="url(#bore)" stroke="#8a4f4f" strokeWidth="1.5" />
      <path d="M905 590L1492 640C1495 700 1490 740 1480 772L880 712C870 700 860 690 845 680C870 670 890 640 905 590Z" fill="url(#arm)" />
    </g>
    <g stroke="#8a8a8a" strokeWidth="1.2" fill="none"><path d="M492 1275V1220M492 1275L545 1265M492 1275L487 1290" /></g>
    <g fontFamily="DejaVu Sans, sans-serif" fontSize="24" fill="#777"><text x="497" y="1220">z</text><text x="557" y="1268">y</text><text x="488" y="1305">x</text></g>
    <path d="M1001 745V770L1006.5 765L1011 773L1014.5 771L1010.5 763.5L1018 763Z" fill="#000" stroke="#fff" strokeWidth=".6" />
  </SceneSvg>
);

/* ---------- small pieces ---------- */
const StepperIcon = ({ c = '#b8b8b8', bg = '#f4f4f4' }) => (
  <Stepper viewBox="0 0 22 32">
    <rect x=".5" y=".5" width="21" height="31" rx="7" fill={bg} stroke="#e0e0e0" />
    <path d="M0 16H22" stroke="#e4e4e4" />
    <path d="M6 11L11 6L16 11M6 21L11 26L16 21" fill="none" stroke={c} strokeWidth="2" strokeLinecap="round" strokeLinejoin="round" />
  </Stepper>
);
const Updown = () => (
  <svg width="12" height="20" viewBox="0 0 12 20"><path d="M2 7L6 2.5L10 7M2 13L6 17.5L10 13" fill="none" stroke="#222" strokeWidth="2.2" strokeLinecap="round" strokeLinejoin="round" /></svg>
);
const Bulb = () => (
  <CellSvg viewBox="0 0 26 28"><path d="M13 2C7 2 4 6 5 11C6 15 9 17 9.5 22H16.5C17 17 20 15 21 11C22 6 19 2 13 2Z" fill="#f5d83c" stroke="#333" strokeWidth="1" /><path d="M9.5 22H16.5L15 26H11Z" fill="#d58a1e" stroke="#6b4a10" strokeWidth=".8" /></CellSvg>
);
const Lock = () => (
  <CellSvg viewBox="0 0 26 28"><path d="M13 12V7C13 3 16 1 19 1C22 1 24 3 24 6V9" fill="none" stroke="#111" strokeWidth="2" /><rect x="1" y="12" width="16" height="14" fill="url(#lock)" stroke="#111" strokeWidth="1.5" /></CellSvg>
);

const tabs = [
  ['Standard', 122], ['CPlanes', 107], ['Set View', 119, true], ['Display', 106], ['Select', 96], ['Viewport Lay...', 188], ['Visibility', 117],
  ['Transform', 131], ['Curve Tools', 147], ['Surface To...', 164], ['Solid Tools', 138], ['SubD Tools', 143], ['Mesh Tools', 142], ['Render Tools', 157], ['Drafting', 115], ['New in V8', 130],
];
const snaps = ['End', 'Near', 'Point', 'Mid', 'Cen', 'Int', 'Perp', 'Tan', 'Quad', 'Knot', 'Vertex', 'Project'];
const layers = [['Layer 01', '#b5281a'], ['Layer 02', '#6a2ebd'], ['Layer 03', '#0000ee'], ['Layer 04', '#347a1e'], ['Layer 05', '#fff']];
const menu = ['File', 'Edit', 'View', 'Display', 'Solution', 'Window', 'Help'];

export default function App() {
  return (
    <Root>
      <GlobalStyle />
      <Defs>
        <defs>
          <linearGradient id="blue" x1="0" y1="0" x2="1" y2="1"><stop offset="0" stopColor="#cdd6fa" /><stop offset=".5" stopColor="#6f86ee" /><stop offset="1" stopColor="#2d3f9f" /></linearGradient>
          <linearGradient id="gray" x1="0" y1="0" x2="0" y2="1"><stop offset="0" stopColor="#fff" /><stop offset="1" stopColor="#bbb" /></linearGradient>
          <linearGradient id="fire" x1="0" y1="1" x2="1" y2="0"><stop offset="0" stopColor="#fbd13e" /><stop offset="1" stopColor="#e5541c" /></linearGradient>
          <linearGradient id="lock" x1="0" y1="0" x2="1" y2="1"><stop offset="0" stopColor="#efe080" /><stop offset="1" stopColor="#f6d93a" /></linearGradient>
          <radialGradient id="ball" cx=".4" cy=".35" r=".7"><stop offset="0" stopColor="#fff" /><stop offset=".6" stopColor="#d5d5d5" /><stop offset="1" stopColor="#777" /></radialGradient>
          <radialGradient id="sph" cx=".6" cy=".3" r=".8"><stop offset="0" stopColor="#dfe5fb" /><stop offset=".5" stopColor="#6f86ee" /><stop offset="1" stopColor="#1f2f86" /></radialGradient>
          <radialGradient id="sph2" cx=".45" cy=".35" r=".7"><stop offset="0" stopColor="#e8f0ff" /><stop offset=".35" stopColor="#3d66d8" /><stop offset="1" stopColor="#07144f" /></radialGradient>
        </defs>
      </Defs>
      <TopArea>
        <Sidebar>
          <SideGroup $mt={64} $gap={56}>
            <SideIcon viewBox="0 0 56 56"><rect x="5" y="11" width="46" height="35" rx="2" stroke="#777" strokeWidth="3" /><rect x="9" y="14" width="38" height="6" fill="#fff" stroke="none" /><path d="M28 26V39M23 34L28 39L33 34" /></SideIcon>
            <SideIcon viewBox="0 0 56 56"><rect x="5" y="11" width="46" height="35" rx="2" stroke="#777" strokeWidth="3" /><rect x="9" y="37" width="38" height="6" fill="#fff" stroke="none" /><path d="M28 32V18M23 23L28 18L33 23" /></SideIcon>
          </SideGroup>
          <SideGroup $mt={307} $gap={57}>
            <SideIcon viewBox="0 0 24 24" $sw={0.9}><path d="M15 6v12a3 3 0 1 0 3-3H6a3 3 0 1 0 3 3V6a3 3 0 1 0-3 3h12a3 3 0 1 0-3-3" transform="translate(-.5 -.5) scale(1.04)" /></SideIcon>
            <SideIcon viewBox="0 0 56 56"><path d="M6 11H21L36 45H50M35 11H50" /></SideIcon>
            <SideIcon viewBox="0 0 56 56"><path d="M9 36L28 18L47 36" /></SideIcon>
            <SideIcon viewBox="0 0 56 56"><path d="M6 30L28 10L50 30H38V45H18V30Z" /></SideIcon>
          </SideGroup>
          <SideGroup $mt={252} $gap={54}>
            <SideIcon viewBox="0 0 56 56"><path d="M7 21H42C50 21 50 42 42 42H30M7 21L18 11M7 21L18 31" /></SideIcon>
            <SideIcon viewBox="0 0 56 56"><rect x="4" y="15" width="48" height="26" rx="2" fill="#000" strokeWidth="3.5" /><path d="M10 22H46M10 28H46" stroke="#fff" strokeWidth="2.5" strokeDasharray="4 3" strokeLinecap="butt" /><path d="M15 34H41" stroke="#fff" strokeWidth="2.5" /></SideIcon>
            <SideIcon viewBox="0 0 56 56"><rect x="6" y="13" width="44" height="31" rx="2" /><path d="M6 8L50 48" stroke="#000" strokeWidth="6" /><path d="M6 8L50 48" /></SideIcon>
          </SideGroup>
        </Sidebar>
        <Main>
          <MenuBar>
            <AppleMark />
            <MenuItem $bold>Rhino 8</MenuItem>
            {menu.map(m => <MenuItem key={m}>{m}</MenuItem>)}
            <MenuRight>
              <StatusCell $w={74}><SiFigma size={32} /></StatusCell>
              <StatusCell $w={75}><SiGrammarly size={34} /></StatusCell>
              <StatusCell $w={77}><SiAdobecreativecloud size={34} /></StatusCell>
              <StatusCell $w={76}><StatusSvg viewBox="0 0 36 36"><rect x="4" y="4" width="24" height="24" rx="4" /><rect x="9" y="9" width="24" height="24" rx="3" fill="#a49db3" stroke="#e2d9f8" /></StatusSvg></StatusCell>
              <StatusCell $w={74}><StatusSvg viewBox="0 0 36 36" $sw={1.8}><rect x="3" y="6" width="30" height="24" rx="3" /><path d="M18 2V34" /><path d="M22 14L30 19L26 20L28 24" fill="#a49db3" /><path d="M8 14H11M8 22H11" /></StatusSvg></StatusCell>
              <StatusCell $w={76}><StatusSvg viewBox="0 0 36 36"><circle cx="11" cy="10" r="5" fill="#a49db3" /><circle cx="25" cy="10" r="5" fill="#a49db3" /><path d="M14 11V30M22 11V30" /></StatusSvg></StatusCell>
              <StatusCell $w={80}><StatusSvg viewBox="0 0 48 36" $s={48}><rect x="2" y="5" width="40" height="26" rx="6" /><rect x="6" y="9" width="24" height="18" rx="2" fill="#a49db3" stroke="none" /><path d="M25 8L18 19H26L20 28" stroke="#e2d9f8" strokeWidth="3" /><path d="M45 14V22" /></StatusSvg></StatusCell>
              <StatusCell $w={75}><StatusSvg viewBox="0 0 36 36" $sw={3.5}><path d="M3 13C12 4 24 4 33 13M9 19C15 14 21 14 27 19" /><circle cx="18" cy="27" r="3" fill="#a49db3" stroke="none" /></StatusSvg></StatusCell>
              <StatusCell $w={69}><StatusSvg viewBox="0 0 36 36"><circle cx="15" cy="14" r="10" /><path d="M22 22L31 33" /></StatusSvg></StatusCell>
              <StatusCell $w={66}><StatusSvg viewBox="0 0 36 36"><rect x="6" y="2" width="24" height="14" rx="7" /><circle cx="23" cy="9" r="3" fill="#a49db3" /><rect x="6" y="19" width="24" height="14" rx="7" fill="#a49db3" /><circle cx="13" cy="26" r="4" fill="#e2d9f8" stroke="none" /></StatusSvg></StatusCell>
              <StatusCell $w={64}><StatusSvg viewBox="0 0 36 36" $none><ellipse cx="18" cy="18" rx="13" ry="16" fill="#cbbdd6" /><ellipse cx="18" cy="18" rx="6" ry="12" fill="#b3b5e6" /></StatusSvg></StatusCell>
              <Clock>Mon Sep 16  3:17 PM</Clock>
            </MenuRight>
          </MenuBar>
          <Window>
            <TitleBar>
              <Lights><Light /><Light /><Light /></Lights>
              <Title>
                <svg width="24" height="32" viewBox="0 0 24 32"><path d="M2 1H16L22 7V31H2Z" fill="#f0f0f0" stroke="#cfcfcf" /><path d="M5 6L12 4L19 12L15 20L10 14L6 15Z" fill="#8f8f8f" /></svg>
                Full Demo - Jewerly Stand
              </Title>
              <span />
            </TitleBar>
            <Toolbar>
              <TabRow>
                {tabs.map(([t, w, a]) => <Tab key={t} $w={w} $active={a}>{t}</Tab>)}
                <GearSlot><Gear s={26} c="#cfcfcf" /></GearSlot>
              </TabRow>
              <ToolRow>
                <Grip><GripDot /><GripDot /><GripDot /><GripDot /></Grip>
                {toolbarA}
                <ToolSep $l={8} $r={4} />
                {toolbarB}
                <ToolSep $l={4} $r={0} />
                {toolbarC}
                <ToolSep $l={10} $r={2} />
                {toolbarD}
                <ToolSep $l={6} $r={0} />
                {toolbarE}
                <ToolSep $l={9} $r={2} />
                {toolbarF}
              </ToolRow>
            </Toolbar>
            <Workspace>
              <Col $w={252}>
                <Panel $h={587}>
                  <DragHead><DragDot /><DragDot /><DragDot /><DragDot /></DragHead>
                  <CommandInput>Command</CommandInput>
                  <ToolGrid>{sideTools}</ToolGrid>
                </Panel>
                <Panel $h={585} $mt={6}>
                  <PanelHead>OSnap<Gear /></PanelHead>
                  <SnapTabs>
                    <SnapTab><svg width="34" height="30" viewBox="0 0 34 30"><circle cx="15" cy="15" r="14" fill="none" stroke="#666" strokeWidth="1.4" /><rect x="12" y="12" width="6" height="6" fill="#fff" stroke="#222" strokeWidth="1.4" /><path d="M18 15H33" stroke="#222" strokeWidth="1.6" /></svg></SnapTab>
                    <SnapTabB><svg width="34" height="30" viewBox="0 0 34 30"><path d="M5 5H27L19 16V27H13V16Z" fill="#777" stroke="#222" strokeWidth="1.5" /><path d="M28 2H33V6M1 24V29H6" fill="none" stroke="#111" strokeWidth="1.4" /></svg></SnapTabB>
                  </SnapTabs>
                  <SnapList>
                    {snaps.map(s => <SnapRow key={s}><CheckBox />{s}</SnapRow>)}
                    <SnapRow $on $mt={34}><CheckBox $on><svg width="17" height="15" viewBox="0 0 17 15"><path d="M2 8L6.5 13L15 2" fill="none" stroke="#111" strokeWidth="2.6" /></svg></CheckBox>Disable</SnapRow>
                  </SnapList>
                </Panel>
              </Col>
              <Col $w={1510} $ml={7}>
                <Viewport>
                  <Scene />
                  <ViewLabel>
                    <ViewName>Perspective</ViewName>
                    <ViewArrow><svg width="14" height="9" viewBox="0 0 14 9"><path d="M0 0H14L7 9Z" fill="#fff" /></svg></ViewArrow>
                  </ViewLabel>
                </Viewport>
                <ViewTabs>
                  <ViewIcon $mr={33} viewBox="0 0 31 30"><path d="M1 1H30V29H1ZM15.5 1V29M1 15H30" fill="none" stroke="#888" strokeWidth="1.6" /><path d="M2 15H30" stroke="#555" strokeWidth="2" /></ViewIcon>
                  <ViewIcon $mr={27} viewBox="0 0 31 30"><rect x="1" y="1" width="29" height="28" fill="#f2eef4" stroke="#a36fb0" strokeWidth="1.6" /><path d="M1 2H30M1 28H30" stroke="#8f4f9f" strokeWidth="2" /></ViewIcon>
                  <ViewSep $first />
                  <ViewTab $active>Perspective</ViewTab>
                  <ViewSep />
                  <ViewTab>Top</ViewTab>
                  <ViewSep />
                  <ViewTab>Front</ViewTab>
                  <ViewSep />
                  <ViewTab>Right</ViewTab>
                  <ViewSep />
                  <ViewTab>Layouts...</ViewTab>
                </ViewTabs>
              </Col>
              <Col $w={418} $ml={5}>
                <Panel $h={587}>
                  <PanelHead>Properties: Viewport<Gear /></PanelHead>
                  <PropBody>
                    <PropContent>
                      <PropIcons>
                        <PropIconBox $w={48} $h={44} $bg="#fff" $mr={12}><IconSvg viewBox="0 0 56 56" $s={50}><Camera /></IconSvg></PropIconBox>
                        <PropIconBox $w={48} $h={44} $mr={16}>
                          <svg width="48" height="44" viewBox="0 0 48 44"><rect x="1.5" y="1.5" width="45" height="41" fill="#ddd" stroke="#808080" strokeWidth="3" /><rect x="5" y="5" width="38" height="34" fill="#fff" stroke="#6ab3e8" strokeWidth="3" /><rect x="9" y="11" width="30" height="20" fill="#fff" stroke="#d02a1f" strokeWidth="2.5" /></svg>
                        </PropIconBox>
                        <PropIconBox $w={44} $h={44} $mr={0}>
                          <svg width="44" height="44" viewBox="0 0 44 44"><ellipse cx="13" cy="35" rx="13" ry="6" fill="#aaa" /><circle cx="14" cy="28" r="11" fill="url(#sph2)" /><circle cx="28" cy="15" r="8" fill="url(#sph2)" /><circle cx="38" cy="7" r="5.5" fill="url(#sph2)" /></svg>
                        </PropIconBox>
                      </PropIcons>
                      <Heading $h={42}>Viewport</Heading>
                      <PropRow $h={55}><PropLabel>Title</PropLabel><TextField $w={140}>Perspective</TextField></PropRow>
                      <PropRow $h={54}><PropLabel>Width</PropLabel><TextField $w={112} $off>1510</TextField><StepperIcon /></PropRow>
                      <PropRow $h={52}><PropLabel>Height</PropLabel><TextField $w={112} $off>1126</TextField><StepperIcon /></PropRow>
                      <PropRow $h={50}><PropLabel>Projection</PropLabel><SelectBox>Perspe...<Updown /></SelectBox></PropRow>
                      <PropRow $h={47}><PropLabel>Display mode</PropLabel><SelectBox>Wirefra...<Updown /></SelectBox></PropRow>
                      <PropRow $h={49}><PropLabel>Locked</PropLabel><PropCheck /></PropRow>
                      <Divider />
                      <Heading $h={40} $mt={12}>Camera</Heading>
                      <PropRow $h={56}><PropLabel>Lens Length (</PropLabel><TextField $w={112}>50.0</TextField><StepperIcon c="#333" bg="#fff" /></PropRow>
                    </PropContent>
                    <SideTabs>
                      <SideTabOn><ColorWheel><WheelHole /></ColorWheel></SideTabOn>
                      <SideTabRest>
                        <svg width="30" height="28" viewBox="0 0 30 28"><rect x="1" y="1" width="28" height="21" fill="#bbb" stroke="#111" strokeWidth="2" /><path d="M3 3H27V9C18 8 10 12 3 19Z" fill="#e2e2e2" /><path d="M11 23H19L22 27H8Z" fill="#111" /></svg>
                        <svg width="30" height="26" viewBox="0 0 30 26"><rect x="1" y="1" width="28" height="24" fill="#fff" stroke="#333" strokeWidth="1.6" /><rect x="2" y="2" width="26" height="2" fill="#334" /><path d="M2 24V17C2 9 28 9 28 17V24Z" fill="#2d55c4" /><text x="15" y="22" textAnchor="middle" fontFamily="Liberation Serif, serif" fontSize="17" fontWeight="700" fill="#fff">?</text></svg>
                      </SideTabRest>
                    </SideTabs>
                  </PropBody>
                </Panel>
                <Panel $h={584} $mt={7}>
                  <PanelHead>Layers<Gear /></PanelHead>
                  <LayerTools>
                    <LayerTool viewBox="0 0 44 44"><path d="M9 9L34 15V29L20 35L9 26Z" fill="#fff" stroke="#111" strokeWidth="1.8" /><path d="M10 11L33 16L31 24L11 18Z" fill="#ef8a62" /><path d="M10 20L20 30" stroke="#3a55c8" strokeWidth="3" /><path d="M27 25V37M21 31H33" stroke="#000" strokeWidth="3.5" /></LayerTool>
                    <LayerTool viewBox="0 0 44 44" fill="none" stroke="#aaa" strokeWidth="1.8"><path d="M7 8L22 5L29 14L18 23L7 20ZM24 17L35 21V31L26 36L18 30" /><path d="M7 24V36H14M11 33L15 36L11 39" /></LayerTool>
                    <LayerTool viewBox="0 0 44 44" fill="#e4e4e4" stroke="#aaa" strokeWidth="1.8"><path d="M9 7L22 17L35 7L37 10L26 21L37 33L34 36L22 25L10 36L7 33L18 21L7 10Z" /></LayerTool>
                    <LayerTool viewBox="0 0 44 44" fill="none" stroke="#aaa" strokeWidth="1.8"><circle cx="20" cy="21" r="13.5" /><path d="M16 14L32 12L36 24V36L24 38L14 28Z" fill="#e8e8e8" /><path d="M15 24L34 22" /></LayerTool>
                    <LayerTool viewBox="0 0 44 44" fill="#e4e4e4" stroke="#aaa" strokeWidth="2"><path d="M9 29L22 16L35 29Z" /></LayerTool>
                    <LayerTool viewBox="0 0 44 44" fill="#e4e4e4" stroke="#aaa" strokeWidth="2"><path d="M9 16H35L22 29Z" /></LayerTool>
                    <LayerTool viewBox="0 0 44 44" fill="#e4e4e4" stroke="#aaa" strokeWidth="2"><path d="M29 9V35L16 22Z" /></LayerTool>
                    <LayerTool viewBox="0 0 44 44"><path d="M9 8C15 5 29 5 35 8L24 22V36L20 36V22Z" fill="#4a68c9" stroke="#1c2f80" strokeWidth="1.6" /><ellipse cx="22" cy="9" rx="12" ry="3" fill="#9fb3ec" stroke="#1c2f80" /></LayerTool>
                    <LayerTool viewBox="0 0 44 44" fill="none" stroke="#555" strokeWidth="1.4"><rect x="10" y="9" width="23" height="25" /><rect x="10" y="9" width="23" height="4" fill="#555" /><path d="M18 13V34M25 13V34M10 20H33M10 27H33" /></LayerTool>
                    <LayerTool viewBox="0 0 44 44"><path d="M10 12H34M10 22H34M10 32H34" stroke="#111" strokeWidth="3.5" strokeLinecap="round" /></LayerTool>
                    <LayerTool viewBox="0 0 44 44"><circle cx="22" cy="22" r="14.5" fill="url(#sph2)" /><text x="22" y="30" textAnchor="middle" fontFamily="Liberation Serif, serif" fontSize="24" fontWeight="700" fill="#fff">?</text></LayerTool>
                  </LayerTools>
                  <SearchBox>
                    <svg width="26" height="26" viewBox="0 0 26 26"><circle cx="11" cy="11" r="8.5" fill="none" stroke="#222" strokeWidth="2" /><path d="M17 17L24 24" stroke="#222" strokeWidth="2.2" /></svg>
                    Search
                  </SearchBox>
                  <LayerList>
                    <LayerHead>
                      <LayerHeadName>Layer</LayerHeadName>
                      <HeadCol /><HeadCol /><HeadCol /><HeadCol /><HeadCol>Ma</HeadCol>
                    </LayerHead>
                    <LayerBody>
                      <LayerRow>
                        <LayerName $bold>Default</LayerName>
                        <svg width="28" height="20" viewBox="0 0 28 20"><path d="M1 11L8 18L27 1" fill="none" stroke="#222" strokeWidth="2.4" /></svg>
                        <span /><span />
                        <Swatch $c="#000" />
                        <MatCircle />
                      </LayerRow>
                      {layers.map(([n, c], i) => (
                        <LayerRow key={n} $last={i === layers.length - 1}>
                          <LayerName>{n}</LayerName>
                          <span />
                          <Bulb />
                          <Lock />
                          <Swatch $c={c} />
                          <MatCircle />
                        </LayerRow>
                      ))}
                    </LayerBody>
                  </LayerList>
                </Panel>
              </Col>
            </Workspace>
            <StatusMsg>
              <MsgGrip><GripDot /><GripDot /></MsgGrip>
              <MsgLine />
              File successfully saved as /Users/preciousaghaeze/Downloads/Full Demo - Jewerly Stand.3dm.
            </StatusMsg>
            <StatusBar>
              <PaneIcon />
              <ListIcon viewBox="0 0 30 30"><path d="M8 6H28M8 15H28M8 24H28" stroke="#666" strokeWidth="3.4" /><path d="M1 6H3M1 15H3M1 24H3" stroke="#666" strokeWidth="3.4" /></ListIcon>
              <StatusItem $w={135}>CPlane</StatusItem>
              <StatusItem $w={135}>x -66.575</StatusItem>
              <StatusItem $w={187}>y -346.868</StatusItem>
              <StatusItem $w={130}>z 0</StatusItem>
              <StatusItem $w={165}>Millimeters</StatusItem>
              <BlackBox />
              <StatusItem $w={192}>Default</StatusItem>
              <StatusItem $w={145}>Grid Snap</StatusItem>
              <StatusItem $w={101}>Ortho</StatusItem>
              <StatusItem $w={107}>Planar</StatusItem>
              <StatusItem $w={111}>Osnap</StatusItem>
              <StatusItem $w={167}>SmartTrack</StatusItem>
              <StatusItem $w={224}>Gumball (CPlane)</StatusItem>
              <LockSvg viewBox="0 0 39 34"><path d="M5 15V8C5 3 13 3 13 8V15" fill="none" stroke="#aaa" strokeWidth="1.6" /><rect x="1" y="15" width="16" height="18" rx="2" fill="#f4f4f4" stroke="#aaa" strokeWidth="1.6" /></LockSvg>
              <StatusItem $w={151}>Auto CPlane (C</StatusItem>
              <PaneIcon $ml={8} />
              <StatusItem $w={20}>:c</StatusItem>
            </StatusBar>
          </Window>
        </Main>
      </TopArea>
      <Bottom><HomeBar /></Bottom>
    </Root>
  );
}
